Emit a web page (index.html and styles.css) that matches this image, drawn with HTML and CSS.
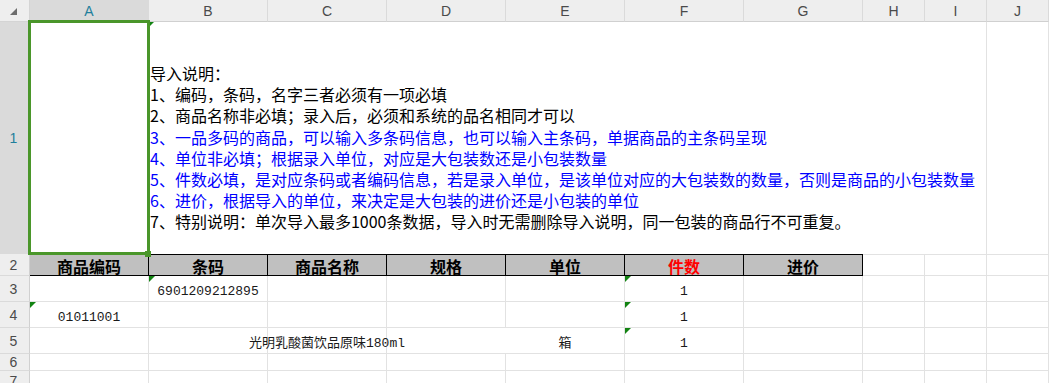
FILE: index.html
```html
<!DOCTYPE html>
<html lang="zh-CN">
<head>
<meta charset="utf-8">
<title>Sheet</title>
<link rel="stylesheet" href="styles.css">
</head>
<body>
<div class="sheet">
  <!-- column headers -->
  <div class="corner"><svg class="corner-tri" width="8" height="8" viewBox="0 0 8 8"><polygon points="7,0 7,7 0,7" fill="#6d6d6d"/></svg></div>
  <div class="ch sel">A</div>
  <div class="ch">B</div>
  <div class="ch">C</div>
  <div class="ch">D</div>
  <div class="ch">E</div>
  <div class="ch">F</div>
  <div class="ch">G</div>
  <div class="ch">H</div>
  <div class="ch">I</div>
  <div class="ch">J</div>

  <!-- row 1 -->
  <div class="rh sel r1">1</div>
  <div class="c r1"></div>
  <div class="c r1 note">
    <span class="mark mark-sm"></span>
    <div class="line">导入说明：</div>
    <div class="line">1、编码，条码，名字三者必须有一项必填</div>
    <div class="line">2、商品名称非必填；录入后，必须和系统的品名相同才可以</div>
    <div class="line blue">3、一品多码的商品，可以输入多条码信息，也可以输入主条码，单据商品的主条码呈现</div>
    <div class="line blue">4、单位非必填；根据录入单位，对应是大包装数还是小包装数量</div>
    <div class="line blue">5、件数必填，是对应条码或者编码信息，若是录入单位，是该单位对应的大包装数的数量，否则是商品的小包装数量</div>
    <div class="line blue">6、进价，根据导入的单位，来决定是大包装的进价还是小包装的单位</div>
    <div class="line">7、特别说明：单次导入最多1000条数据，导入时无需删除导入说明，同一包装的商品行不可重复。</div>
  </div>
  <div class="c r1"></div>

  <!-- row 2 -->
  <div class="rh">2</div>
  <div class="c th">商品编码</div>
  <div class="c th">条码</div>
  <div class="c th">商品名称</div>
  <div class="c th">规格</div>
  <div class="c th">单位</div>
  <div class="c th red">件数</div>
  <div class="c th">进价</div>
  <div class="c r2"></div>
  <div class="c r2"></div>
  <div class="c r2"></div>

  <!-- row 3 -->
  <div class="rh">3</div>
  <div class="c"></div>
  <div class="c d"><span class="mark"></span>6901209212895</div>
  <div class="c"></div>
  <div class="c"></div>
  <div class="c"></div>
  <div class="c d"><span class="mark"></span>1</div>
  <div class="c"></div>
  <div class="c"></div>
  <div class="c"></div>
  <div class="c"></div>

  <!-- row 4 -->
  <div class="rh">4</div>
  <div class="c d"><span class="mark"></span>01011001</div>
  <div class="c"></div>
  <div class="c"></div>
  <div class="c"></div>
  <div class="c"></div>
  <div class="c d"><span class="mark"></span>1</div>
  <div class="c"></div>
  <div class="c"></div>
  <div class="c"></div>
  <div class="c"></div>

  <!-- row 5 -->
  <div class="rh">5</div>
  <div class="c"></div>
  <div class="c"></div>
  <div class="c d over">光明乳酸菌饮品原味180ml</div>
  <div class="c nl"></div>
  <div class="c d">箱</div>
  <div class="c d"><span class="mark"></span>1</div>
  <div class="c"></div>
  <div class="c"></div>
  <div class="c"></div>
  <div class="c"></div>

  <!-- row 6 -->
  <div class="rh">6</div>
  <div class="c"></div><div class="c"></div><div class="c"></div><div class="c"></div><div class="c"></div>
  <div class="c"></div><div class="c"></div><div class="c"></div><div class="c"></div><div class="c"></div>

  <!-- row 7 -->
  <div class="rh">7</div>
  <div class="c"></div><div class="c"></div><div class="c"></div><div class="c"></div><div class="c"></div>
  <div class="c"></div><div class="c"></div><div class="c"></div><div class="c"></div><div class="c"></div>

  <div class="selection"></div>
  <div class="handle"></div>
</div>
</body>
</html>
```

FILE: styles.css
```css
* { box-sizing: border-box; }
html, body { margin: 0; padding: 0; background: #fff; overflow: hidden; }
body { width: 1050px; height: 383px; }

.sheet {
  position: relative;
  display: grid;
  grid-template-columns: 30px repeat(7, 119px) repeat(3, 62px);
  grid-template-rows: 22px 232px 22px 26px 26px 26px 17px 20px;
  font-family: "Liberation Sans", Arial, sans-serif;
}

.corner {
  background: #eeeeee;
  border-right: 1px solid #d4d4d4;
  border-bottom: 1px solid #d4d4d4;
  display: flex;
  align-items: flex-start;
  justify-content: flex-start;
  padding: 8px 0 0 10px;
}
.corner-tri { display: block; }

.ch {
  background: #eeeeee;
  border-right: 1px solid #dadada;
  border-bottom: 1px solid #d0d0d0;
  color: #4a4a4a;
  font-size: 14px;
  display: flex;
  align-items: center;
  justify-content: center;
  padding-top: 1px;
}
.ch.sel { background: #dadada; color: #1f7f9c; }

.rh {
  background: #eeeeee;
  border-right: 1px solid #d0d0d0;
  border-bottom: 1px solid #dadada;
  color: #4a4a4a;
  font-size: 14px;
  display: flex;
  align-items: center;
  justify-content: center;
  padding-right: 2px;
}
.rh.sel { background: #dadada; color: #1f7f9c; }

.c {
  position: relative;
  border-right: 1px solid #e2e2e2;
  border-bottom: 1px solid #e2e2e2;
  background: #fff;
}
.c.r1 { border-bottom: none; }
.c.nl { border-right: none; }

.note {
  grid-column: span 8;
  padding: 41px 0 0 1px;
  white-space: nowrap;
  font-family: "Noto Sans CJK SC", "Liberation Sans", sans-serif;
  font-size: 16px;
  color: #000;
}
.note .line { height: 21.2px; line-height: 21px; }
.note .blue { color: #0000ff; }

.th {
  background: #c0c0c0;
  border-top: 1px solid #000;
  border-right: 1px solid #000;
  border-bottom: 1px solid #000;
  font-family: "Noto Sans CJK SC", sans-serif;
  font-weight: bold;
  font-size: 16px;
  color: #000;
  display: flex;
  align-items: center;
  justify-content: center;
  line-height: 1;
  padding-top: 1px;
}
.th.red { color: #ff0000; }
.r2 { border-top: 1px solid #e2e2e2; }

.d {
  display: flex;
  align-items: flex-end;
  justify-content: center;
  white-space: nowrap;
  font-family: "Liberation Mono", "Noto Sans CJK SC", monospace;
  font-size: 13px;
  line-height: 15px;
  color: #1a1a1a;
  padding-bottom: 2px;
}
.d.over { overflow: visible; z-index: 1; }

.mark {
  position: absolute;
  left: 0;
  top: 0;
  width: 0;
  height: 0;
  border-top: 6px solid #128312;
  border-right: 6px solid transparent;
}
.mark-sm { border-top-width: 4px; border-right-width: 4px; left: 1px; }

.selection {
  position: absolute;
  left: 28px;
  top: 20px;
  width: 122px;
  height: 235px;
  border: 3px solid #4a962a;
  pointer-events: none;
}
.handle {
  position: absolute;
  left: 145px;
  top: 251px;
  width: 6px;
  height: 6px;
  background: #4a962a;
}
```
